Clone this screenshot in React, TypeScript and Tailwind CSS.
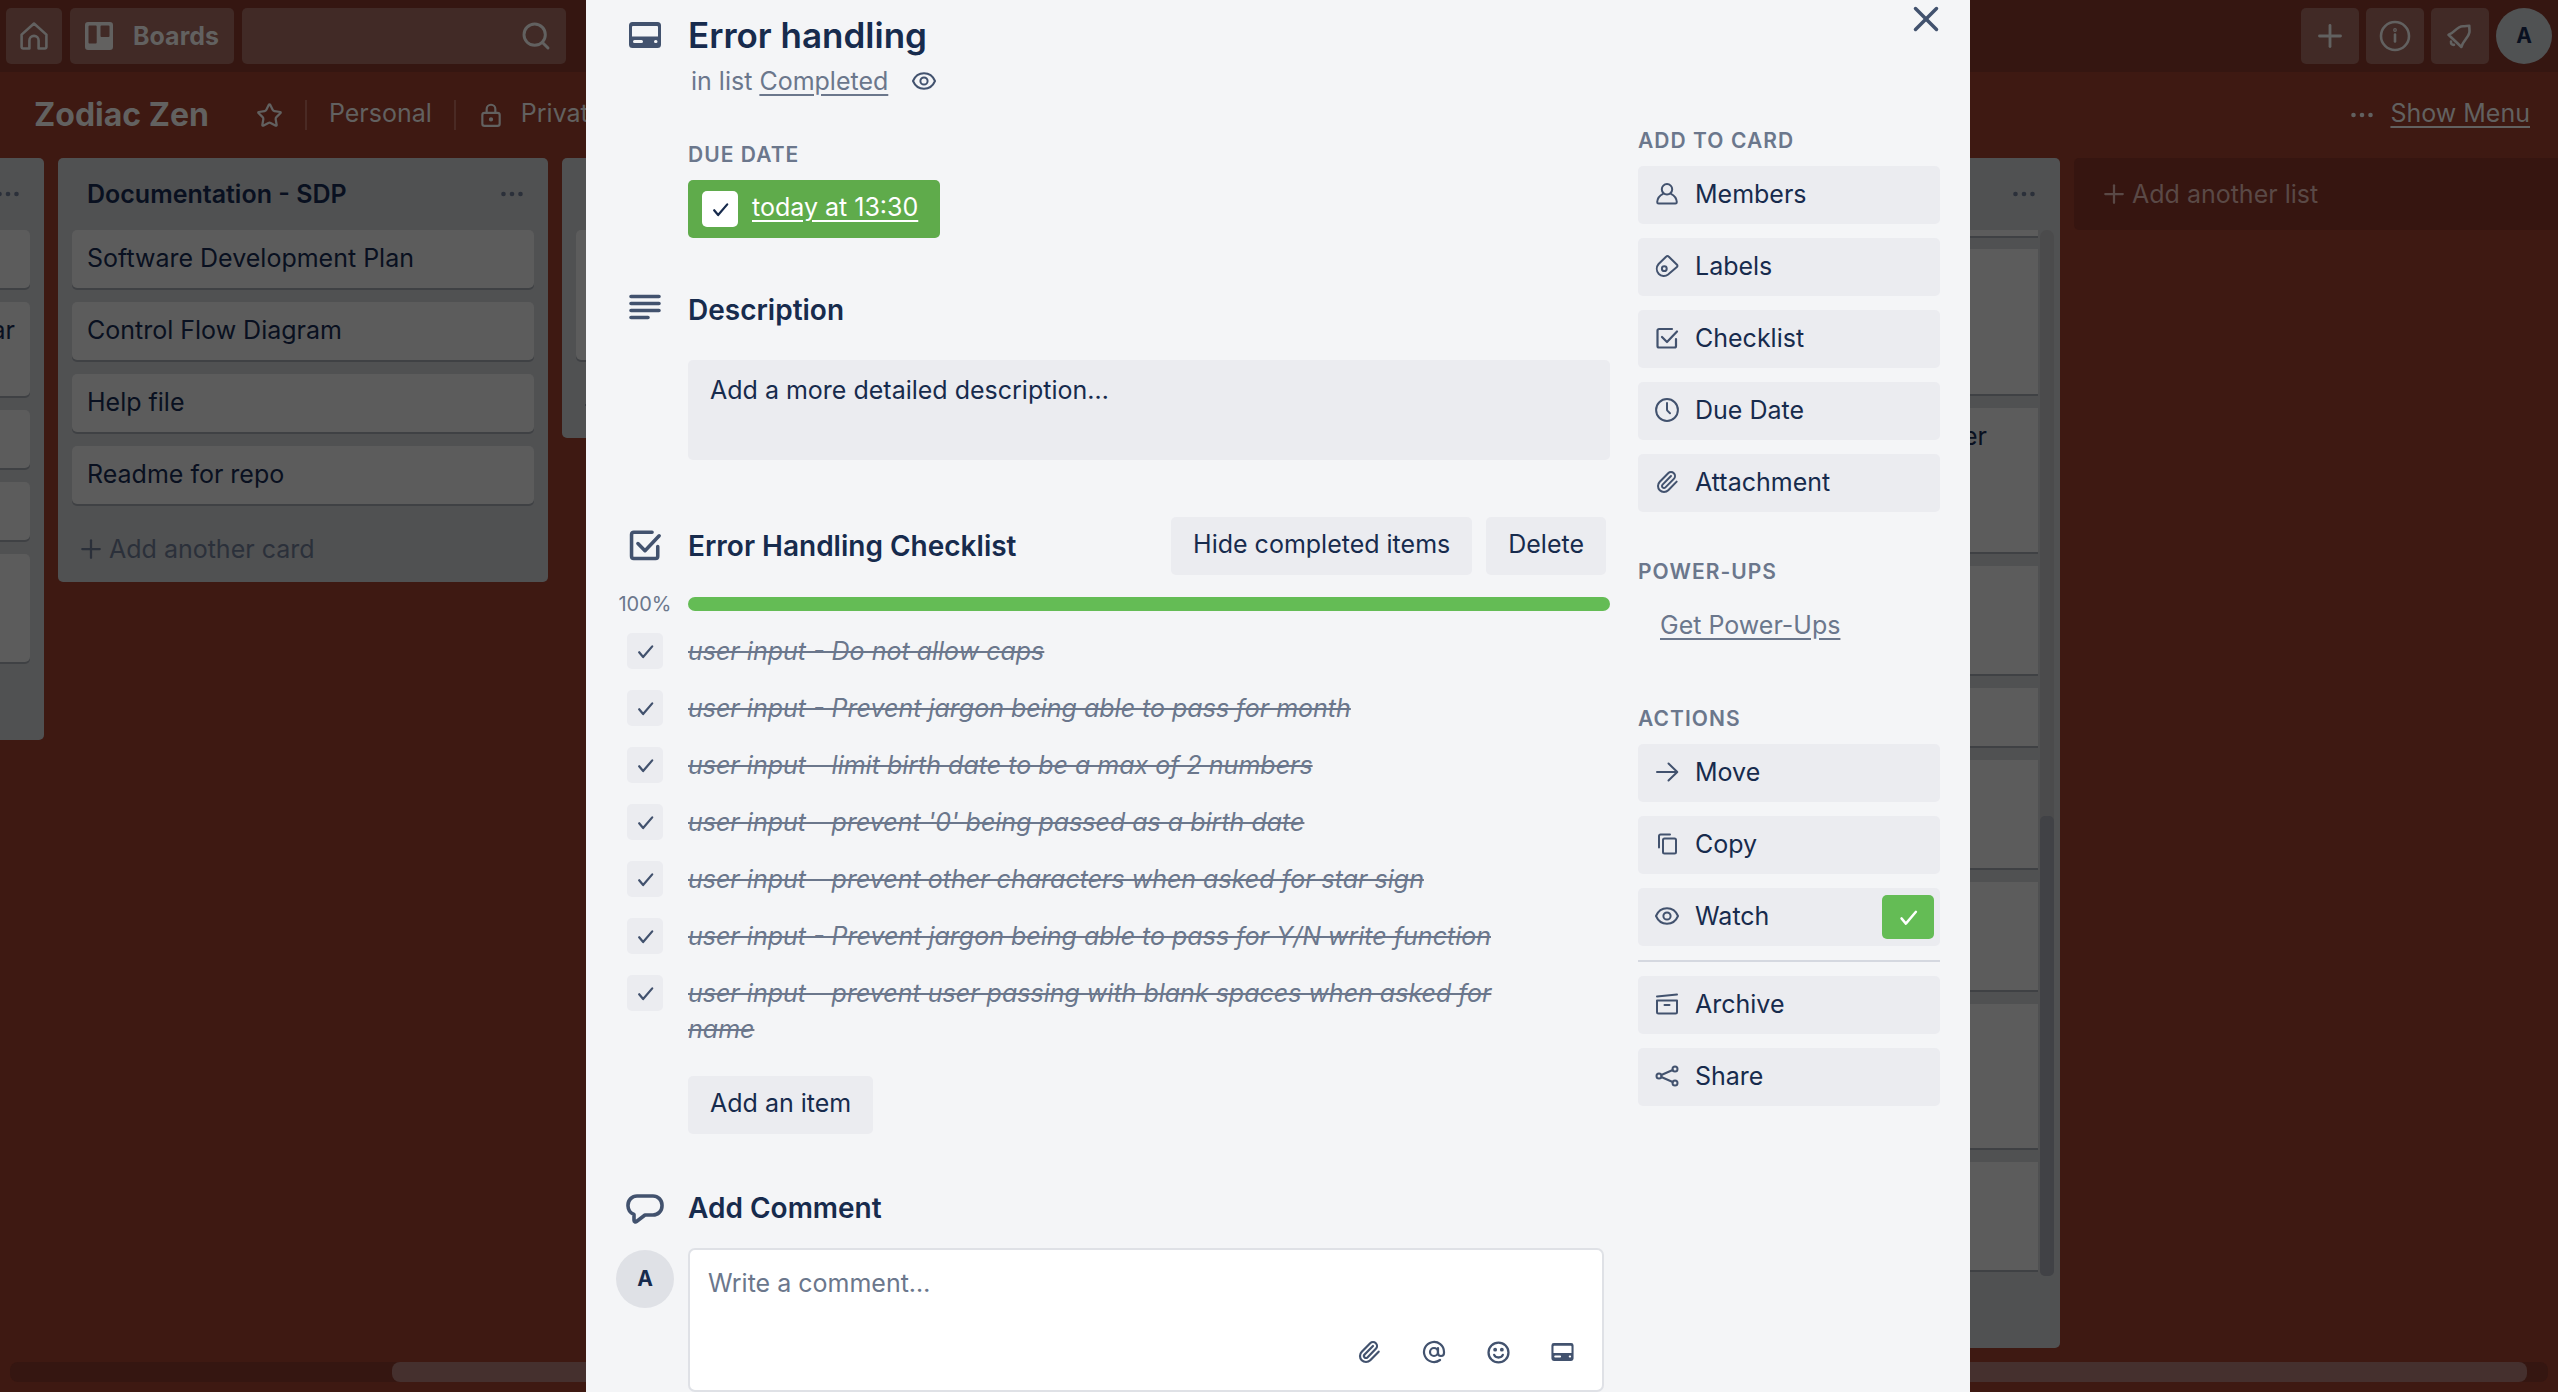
import type { ReactNode } from "react";
import { AtSign, Paperclip, Plus, Search, Star, X } from "lucide-react";

type IconProps = { className?: string };

function Svg({ className, box = "0 0 24 24", width = 2, children }: IconProps & { box?: string; width?: number; children: ReactNode }) {
  return (
    <svg viewBox={box} className={className} fill="none" stroke="currentColor" strokeWidth={width} strokeLinecap="round" strokeLinejoin="round" aria-hidden="true">
      {children}
    </svg>
  );
}

const HomeIcon = ({ className }: IconProps) => (
  <Svg className={className} box="0 0 28 28" width={2.6}>
    <path d="M1.6 12.6 14 1.5l12.4 11.1V25a1.5 1.5 0 0 1-1.5 1.5h-6.3v-8a4.6 4.6 0 0 0-9.2 0v8H3.1A1.5 1.5 0 0 1 1.6 25z" />
  </Svg>
);

const BoardsIcon = ({ className }: IconProps) => (
  <svg viewBox="0 0 28 28" className={className} fill="currentColor" aria-hidden="true">
    <path fillRule="evenodd" d="M3 0h22a3 3 0 0 1 3 3v22a3 3 0 0 1-3 3H3a3 3 0 0 1-3-3V3a3 3 0 0 1 3-3zm1.5 3.5a1 1 0 0 0-1 1v16a1 1 0 0 0 1 1h6.200a1 1 0 0 0 1-1v-16a1 1 0 0 0-1-1zm12 0a1 1 0 0 0-1 1v9.500a1 1 0 0 0 1 1h7a1 1 0 0 0 1-1v-9.500a1 1 0 0 0-1-1z" />
  </svg>
);

const LockIcon = ({ className }: IconProps) => (
  <Svg className={className}>
    <rect x="4" y="10" width="16" height="12" rx="2" />
    <path d="M8 10V6.500a4 4 0 0 1 8 0V10" />
    <circle cx="12" cy="16" r="1" fill="currentColor" />
  </Svg>
);

const InfoIcon = ({ className }: IconProps) => (
  <Svg className={className} box="0 0 32 32" width={2.6}>
    <circle cx="16" cy="16" r="14" />
    <path d="M16 14.500v7" />
    <circle cx="16" cy="10" r=".6" />
  </Svg>
);

const BellIcon = ({ className }: IconProps) => (
  <Svg className={className} box="0 0 28 28" width={2.6}>
    <path d="M2.500 12.800C9 11 10 4.500 17 4.200c2 0 4-.3 6.300-.4-.1 2.200.5 4.600.1 6.700-1 5.500-6.500 8-8 14.500z" />
    <path d="M5 19.500c-.2 2.500 1 3.500 3 3.300" />
  </Svg>
);

const DotsIcon = ({ className }: IconProps) => (
  <svg viewBox="0 0 24 8" className={className} fill="currentColor" aria-hidden="true">
    <circle cx="3.500" cy="4" r="2.300" />
    <circle cx="12" cy="4" r="2.300" />
    <circle cx="20.500" cy="4" r="2.300" />
  </svg>
);

const CardIcon = ({ className }: IconProps) => (
  <svg viewBox="0 0 32 26" className={className} fill="currentColor" aria-hidden="true">
    <path fillRule="evenodd" d="M3.500 0h25A3.500 3.500 0 0 1 32 3.500v19a3.500 3.500 0 0 1-3.500 3.500h-25A3.500 3.500 0 0 1 0 22.500v-19A3.500 3.500 0 0 1 3.500 0zM4 4a1 1 0 0 0-1 1v9.500h26V5a1 1 0 0 0-1-1zm1.500 14a1.500 1.500 0 0 0 0 3h7a1.500 1.500 0 0 0 0-3zm21 0a1.500 1.500 0 0 0 0 3h.5a1.500 1.500 0 0 0 0-3z" />
  </svg>
);

const LinesIcon = ({ className }: IconProps) => (
  <Svg className={className} box="0 0 32 26" width={3.6}>
    <path d="M2 2.500h28M2 9.500h28M2 16.500h28M2 23.500h17" />
  </Svg>
);

const ChecklistIcon = ({ className, width = 2.2 }: IconProps & { width?: number }) => (
  <Svg className={className} width={width}>
    <path d="M17 3H4a1.500 1.500 0 0 0-1.500 1.500V20A1.500 1.500 0 0 0 4 21.500h15.500A1.500 1.500 0 0 0 21 20v-7" />
    <path d="m7 11 5 5L22 5.500" />
  </Svg>
);

const CheckIcon = ({ className }: IconProps) => (
  <Svg className={className} width={2.8}>
    <path d="m4 13 5 6L20.500 5.500" />
  </Svg>
);

const EyeIcon = ({ className }: IconProps) => (
  <Svg className={className}>
    <path d="M1 12C3 7.300 7 4.300 12 4.300S21 7.300 23 12C21 16.700 17 19.700 12 19.700S3 16.700 1 12z" />
    <circle cx="12" cy="12" r="3.600" />
  </Svg>
);

const MemberIcon = ({ className }: IconProps) => (
  <Svg className={className}>
    <circle cx="12" cy="7.300" r="5.200" />
    <path d="M8 11.800c-3.500 1.700-5.500 4.500-5.800 8.200 0 .9.500 1.500 1.400 1.500h16.800c.9 0 1.400-.6 1.400-1.500-.3-3.700-2.300-6.500-5.800-8.200" />
  </Svg>
);

const LabelIcon = ({ className }: IconProps) => (
  <Svg className={className}>
    <path d="M11.300 2.500 3.600 10a7.500 7.500 0 0 0 0 9.700c2.700 2.800 6.800 3 9.500.8l8.800-7.500a1.500 1.500 0 0 0 .1-2.200l-8.400-8.300a1.600 1.600 0 0 0-2.300 0z" />
    <circle cx="9.300" cy="14.700" r="2.400" />
  </Svg>
);

const ClockIcon = ({ className }: IconProps) => (
  <Svg className={className}>
    <circle cx="12" cy="12" r="10.900" />
    <path d="M12 5v6.500q0 .8.600 1.400l2.400 2.300" />
  </Svg>
);

const ArrowIcon = ({ className }: IconProps) => (
  <Svg className={className}>
    <path d="M2 12h20M13.500 3.500 22.300 12l-8.800 8.500" />
  </Svg>
);

const CopyIcon = ({ className }: IconProps) => (
  <Svg className={className}>
    <path d="M4 15.500V4a1.500 1.500 0 0 1 1.500-1.500H15" />
    <rect x="8" y="6.500" width="13" height="15" rx="1.500" />
  </Svg>
);

const ArchiveIcon = ({ className }: IconProps) => (
  <Svg className={className}>
    <path d="M2 4.500 22 2.500M2 8.500h20V20a1.500 1.500 0 0 1-1.500 1.500h-17A1.500 1.500 0 0 1 2 20zM9.500 13h5" />
  </Svg>
);

const ShareIcon = ({ className }: IconProps) => (
  <Svg className={className}>
    <circle cx="4" cy="12" r="2.500" />
    <circle cx="20" cy="5" r="2.500" />
    <circle cx="20" cy="19" r="2.500" />
    <path d="M6.300 11 17.700 6M6.300 13l11.400 5" />
  </Svg>
);

const CommentIcon = ({ className }: IconProps) => (
  <Svg className={className} box="0 0 38 30" width={3.6}>
    <path d="M11 2h16a9 9 0 0 1 9 9v1a9 9 0 0 1-9 9h-8l-8.500 6.500c-1 .8-2.500.3-2.500-1.200V20.500A9.500 9.500 0 0 1 2 12v-1a9 9 0 0 1 9-9z" />
  </Svg>
);

const SmileIcon = ({ className }: IconProps) => (
  <Svg className={className} width={2.4}>
    <circle cx="12" cy="12" r="10.400" />
    <path d="M7.500 14.500c1.500 3.600 7.500 3.600 9 0" />
    <circle cx="8.500" cy="9" r=".8" fill="currentColor" />
    <circle cx="15.500" cy="9" r=".8" fill="currentColor" />
  </Svg>
);

function Card({ children, className = "h-[58px]" }: { children?: ReactNode; className?: string }) {
  return <div className={`shrink-0 rounded-[5px] bg-[#5c5c5c] px-[15px] pt-3 text-[#091020] shadow-[0_2px_0_#3f4144] ${className}`}>{children}</div>;
}

function List({ title, canAdd = true, children }: { title?: string; canAdd?: boolean; children: ReactNode }) {
  return (
    <section className="w-[490px] shrink-0 rounded-[5px] bg-[#505152]">
      <header className="flex h-[72px] items-center justify-between pl-[29px] pr-6">
        <h2 className="font-semibold text-[#091020]">{title}</h2>
        <button aria-label="List actions" className="text-[#2b303a]"><DotsIcon className="h-2 w-6" /></button>
      </header>
      <div className="flex flex-col gap-[14px] px-[14px]">{children}</div>
      <div className="h-[78px] pl-[18px] pt-3">
        {canAdd && (
          <button className="flex h-full items-center gap-[3px] text-[#2b303a]">
            <Plus className="size-[30px]" strokeWidth={1.8} />
            Add another card
          </button>
        )}
      </div>
    </section>
  );
}

const scrolledCards = ["h-[145px]", "h-[144px]", "h-[108px]", "h-[58px]", "h-[108px]", "h-[108px]", "h-[144px]", "h-[108px]"];

function Board() {
  return (
    <div className="flex h-full flex-col bg-[#3e1912] text-[#626160]">
      <nav className="flex h-[72px] shrink-0 items-center gap-2 bg-[#351611] px-1.5">
        <button aria-label="Home" className="flex size-14 items-center justify-center rounded-[5px] bg-[#412a26]"><HomeIcon className="size-7" /></button>
        <button className="flex h-14 items-center gap-5 rounded-[5px] bg-[#412a26] px-[15px] font-bold">
          <BoardsIcon className="size-7" />
          Boards
        </button>
        <label className="flex h-14 w-[324px] items-center rounded-[5px] bg-[#412a26] pr-[14px]">
          <input aria-label="Search" className="h-full min-w-0 flex-1 bg-transparent pl-3 outline-none" />
          <Search className="size-8" strokeWidth={2.2} />
        </label>
        <div className="ml-auto flex gap-[7px]">
          <button aria-label="Create" className="flex h-14 w-[58px] items-center justify-center rounded-[5px] bg-[#412a26]"><Plus className="size-9" strokeWidth={1.9} /></button>
          <button aria-label="Information" className="flex h-14 w-[58px] items-center justify-center rounded-[5px] bg-[#412a26]"><InfoIcon className="size-8" /></button>
          <button aria-label="Notifications" className="flex h-14 w-[58px] items-center justify-center rounded-[5px] bg-[#412a26]"><BellIcon className="size-7" /></button>
          <button className="size-14 rounded-full bg-[#505253] text-[21px] font-bold text-[#091020]">A</button>
        </div>
      </nav>
      <header className="flex h-[86px] shrink-0 items-center pl-[34px] pr-7">
        <h1 className="text-[32px] font-bold">Zodiac Zen</h1>
        <button aria-label="Star board" className="ml-[47px]"><Star className="size-[27px]" /></button>
        <span className="ml-[22px] h-[30px] w-0.5 bg-[#4a2a24]" />
        <button className="ml-[22px] pb-1">Personal</button>
        <span className="ml-[22px] h-[30px] w-0.5 bg-[#4a2a24]" />
        <button className="ml-[22px] flex items-center gap-[17px]"><LockIcon className="size-[26px]" /><span className="pb-1">Private</span></button>
        <div className="ml-auto flex items-center gap-4">
          <DotsIcon className="h-2 w-6" />
          <a href="#menu" className="pb-1 underline underline-offset-4">Show Menu</a>
        </div>
      </header>
      <main className="-ml-[446px] flex min-h-0 flex-1 items-start gap-[14px]">
        <List canAdd={false}>
          <Card />
          <Card className="h-[94px] text-right">ar</Card>
          <Card />
          <Card />
          <Card className="h-[108px]" />
        </List>
        <List title="Documentation - SDP">
          <Card>Software Development Plan</Card>
          <Card>Control Flow Diagram</Card>
          <Card>Help file</Card>
          <Card>Readme for repo</Card>
        </List>
        <List><Card className="h-[130px]" /></List>
        <List><Card /></List>
        <section className="flex h-[1190px] max-h-full w-[490px] shrink-0 flex-col rounded-[5px] bg-[#505152]">
          <header className="flex h-[72px] shrink-0 items-center justify-end pr-6">
            <button aria-label="List actions" className="text-[#2b303a]"><DotsIcon className="h-2 w-6" /></button>
          </header>
          <div className="mb-[72px] flex min-h-0 flex-1 pl-[14px] pr-1.5">
            <div className="flex min-w-0 flex-1 flex-col gap-[14px] overflow-hidden pr-0.5">
              <div className="-mb-px h-1.5 shrink-0 bg-[#5c5c5c] shadow-[0_2px_0_#3f4144]" />
              {scrolledCards.map((height, i) => (
                <div key={i} className={`shrink-0 bg-[#5c5c5c] pr-[51px] pt-3 text-right text-[#091020] shadow-[0_2px_0_#3f4144] ${height}`}>{i === 1 ? "er" : null}</div>
              ))}
            </div>
            <div className="flex w-[14px] flex-col justify-end rounded-full bg-[#4b4b4c]">
              <div className="h-[460px] rounded-[5px] bg-[#414246]" />
            </div>
          </div>
        </section>
        <button className="flex h-[72px] w-[490px] shrink-0 items-center gap-[3px] rounded-[5px] bg-[#361510] pl-[25px] text-[#5a4946]">
          <Plus className="size-[30px]" strokeWidth={1.8} />
          Add another list
        </button>
      </main>
      <div className="mx-2.5 mb-2.5 flex h-5 shrink-0 rounded-lg bg-[#351611] pl-[382px] pr-[21px]">
        <div className="flex-1 rounded-lg bg-[#45302e]" />
      </div>
    </div>
  );
}

function Row({ icon, children }: { icon?: ReactNode; children: ReactNode }) {
  return (
    <div className="grid grid-cols-[58px_1fr] gap-x-[14px]">
      <div className="flex justify-center text-[#42526e]">{icon}</div>
      {children}
    </div>
  );
}

function SideHeading({ children }: { children: ReactNode }) {
  return <h3 className="mb-[13px] text-[21px] leading-6 font-semibold tracking-wider text-[#6b778c] uppercase">{children}</h3>;
}

function SideButton({ icon, label, children }: { icon: ReactNode; label: string; children?: ReactNode }) {
  return (
    <button className="flex h-[58px] w-full items-center rounded-[5px] bg-[#ebecf0] pl-[17px] pr-1.5">
      <span className="mr-4 pb-0.5 text-[#42526e]">{icon}</span>
      <span className="pb-[3px]">{label}</span>
      {children}
    </button>
  );
}

const items = [
  "user input - Do not allow caps",
  "user input - Prevent jargon being able to pass for month",
  "user input - limit birth date to be a max of 2 numbers",
  "user input - prevent '0' being passed as a birth date",
  "user input - prevent other characters when asked for star sign",
  "user input - Prevent jargon being able to pass for Y/N write function",
  "user input - prevent user passing with blank spaces when asked for name",
];

function CardDialog() {
  return (
    <div role="dialog" aria-label="Error handling" className="relative h-full w-full max-w-[1384px] overflow-hidden bg-[#f4f5f7] px-[30px] pt-[13px] text-[#172b4d]">
      <button aria-label="Close" className="absolute -top-0.5 right-[23px] text-[#42526e]"><X className="size-[42px]" strokeWidth={2} /></button>
      <Row icon={<CardIcon className="mt-[9px] h-[26px] w-8" />}>
        <h2 className="text-[35px] leading-[44px] font-semibold">Error handling</h2>
      </Row>
      <div className="mt-2 flex items-center pl-[75px] text-[#6b778c]">
        <span>in list <a href="#completed" className="underline underline-offset-4">Completed</a></span>
        <EyeIcon className="ml-6 size-6 text-[#42526e]" />
      </div>

      <div className="flex gap-7">
        <div className="min-w-0 flex-1 pt-[46px]">
          <div className="pl-[72px]">
            <SideHeading>Due date</SideHeading>
            <label className="inline-flex h-[58px] items-center gap-[14px] rounded-[5px] bg-[#5fab4b] px-[14px] pr-[22px] text-white">
              <span className="relative flex size-9 items-center justify-center">
                <input type="checkbox" defaultChecked className="absolute inset-0 appearance-none rounded-[5px] bg-white" />
                <CheckIcon className="relative size-[19px] text-[#172b4d]" />
              </span>
              <span className="pb-1 underline underline-offset-4">today at 13:30</span>
            </label>
          </div>

          <div className="mt-[54px]">
            <Row icon={<LinesIcon className="mt-0.5 h-[26px] w-8" />}>
              <h3 className="text-[28px] leading-9 font-semibold">Description</h3>
            </Row>
          </div>
          <div className="mt-8 flex pl-[72px]">
            <textarea aria-label="Description" placeholder="Add a more detailed description…" className="h-[100px] flex-1 resize-none rounded-[5px] bg-[#ebecf0] px-[22px] py-[14px] outline-none placeholder:text-[#172b4d]" />
          </div>

          <div className="mt-[57px]">
            <Row icon={<ChecklistIcon className="mt-[11px] size-[34px]" width={2.5} />}>
              <div className="flex items-center gap-[14px] pr-1">
                <h3 className="flex-1 text-[28px] leading-9 font-semibold">Error Handling Checklist</h3>
                <button className="h-[58px] rounded-[5px] bg-[#ebecf0] px-[22px] pb-1">Hide completed items</button>
                <button className="h-[58px] rounded-[5px] bg-[#ebecf0] px-[22px] pb-1">Delete</button>
              </div>
            </Row>
          </div>
          <div className="mt-[19px]">
            <Row icon={<span className="text-xl leading-5 text-[#6b778c]">100%</span>}>
              <div role="progressbar" aria-label="Checklist progress" aria-valuenow={100} className="h-[14px] self-center rounded-full bg-[#64bc55]" />
            </Row>
          </div>
          <ul className="mt-[19px] flex flex-col gap-[21px]">
            {items.map((item) => (
              <li key={item}>
                <label className="grid grid-cols-[58px_1fr] gap-x-[14px]">
                  <span className="relative mx-auto flex size-9 items-center justify-center">
                    <input type="checkbox" defaultChecked className="absolute inset-0 appearance-none rounded-[5px] bg-[#ebecf0]" />
                    <CheckIcon className="relative size-[19px] text-[#42526e]" />
                  </span>
                  <span className="pr-[70px] leading-9 text-[#6b778c] italic line-through">{item}</span>
                </label>
              </li>
            ))}
          </ul>
          <div className="mt-[29px] pl-[72px]">
            <button className="h-[58px] rounded-[5px] bg-[#ebecf0] px-[22px] pb-1">Add an item</button>
          </div>

          <div className="mt-14">
            <Row icon={<CommentIcon className="mt-1 h-[30px] w-[38px]" />}>
              <h3 className="text-[28px] leading-9 font-semibold">Add Comment</h3>
            </Row>
          </div>
          <div className="mt-[22px]">
            <Row icon={<span className="mt-0.5 flex size-[58px] items-center justify-center rounded-full bg-[#dfe1e6] text-[21px] font-bold text-[#172b4d]">A</span>}>
              <div className="mr-1.5 flex h-[144px] flex-col rounded-[7px] border-2 border-[#dfe1e6] bg-white">
                <textarea aria-label="Comment" placeholder="Write a comment…" className="min-h-0 flex-1 resize-none px-[18px] pt-[17px] outline-none placeholder:text-[#6b778c]" />
                <div className="flex items-center justify-end gap-[41px] pr-7 pb-[26px] text-[#42526e]">
                  <button aria-label="Attach"><Paperclip className="size-6" strokeWidth={2.2} /></button>
                  <button aria-label="Mention"><AtSign className="size-6" strokeWidth={2.2} /></button>
                  <button aria-label="Emoji"><SmileIcon className="size-[23px]" /></button>
                  <button aria-label="Link card"><CardIcon className="h-[18px] w-[23px]" /></button>
                </div>
              </div>
            </Row>
          </div>
        </div>

        <aside className="w-[302px] shrink-0 pt-8">
          <SideHeading>Add to card</SideHeading>
          <div className="flex flex-col gap-[14px]">
            <SideButton icon={<MemberIcon className="size-6" />} label="Members" />
            <SideButton icon={<LabelIcon className="size-6" />} label="Labels" />
            <SideButton icon={<ChecklistIcon className="size-6" />} label="Checklist" />
            <SideButton icon={<ClockIcon className="size-6" />} label="Due Date" />
            <SideButton icon={<Paperclip className="size-6" />} label="Attachment" />
          </div>
          <div className="mt-12">
            <SideHeading>Power-Ups</SideHeading>
            <a href="#power-ups" className="mt-[25px] ml-[22px] block text-[#6b778c] underline underline-offset-4">Get Power-Ups</a>
          </div>
          <div className="mt-[66px]">
            <SideHeading>Actions</SideHeading>
            <div className="flex flex-col gap-[14px]">
              <SideButton icon={<ArrowIcon className="size-6" />} label="Move" />
              <SideButton icon={<CopyIcon className="size-6" />} label="Copy" />
              <SideButton icon={<EyeIcon className="size-6" />} label="Watch">
                <span className="ml-auto flex h-11 w-[52px] items-center justify-center rounded-[5px] bg-[#64bc55] text-white"><CheckIcon className="size-[21px]" /></span>
              </SideButton>
              <hr className="h-0.5 border-0 bg-[#d5d8e0]" />
              <SideButton icon={<ArchiveIcon className="size-6" />} label="Archive" />
              <SideButton icon={<ShareIcon className="size-6" />} label="Share" />
            </div>
          </div>
        </aside>
      </div>
    </div>
  );
}

export default function App() {
  return (
    <div className="relative h-screen overflow-hidden font-['Inter',sans-serif] text-[25px] leading-8">
      <Board />
      <div className="absolute inset-0 flex justify-center pr-0.5">
        <CardDialog />
      </div>
    </div>
  );
}
